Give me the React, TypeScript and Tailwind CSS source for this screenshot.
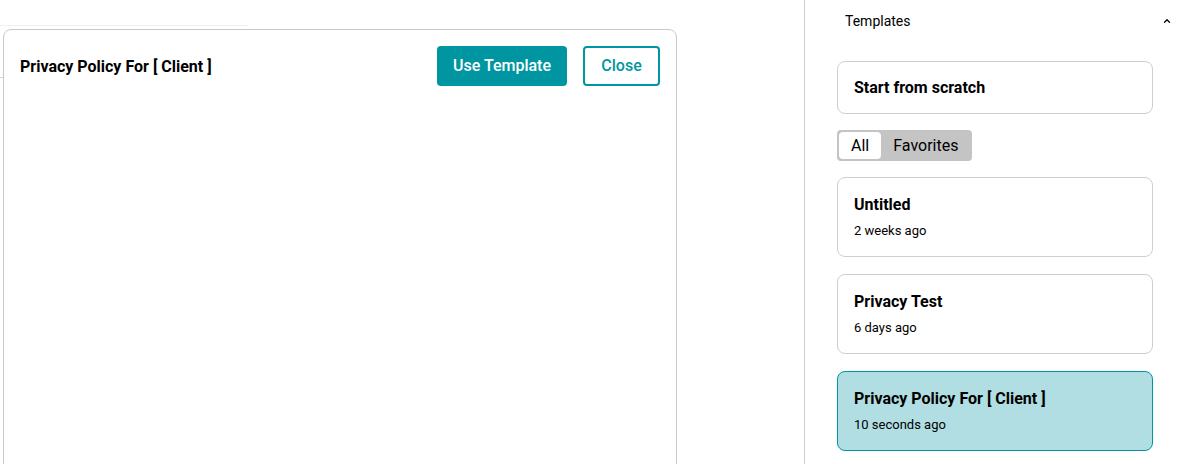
import React from 'react';
import { ChevronUp } from 'lucide-react';

const templates = [
  { name: 'Untitled', time: '2 weeks ago' },
  { name: 'Privacy Test', time: '6 days ago' },
  { name: 'Privacy Policy For [ Client ]', time: '10 seconds ago', active: true },
];

export default function App() {
  return (
    <div
      className="flex h-[464px] w-[1181px] overflow-hidden bg-white text-black"
      style={{ fontFamily: 'Roboto, "Liberation Sans", sans-serif' }}
    >
      {/* Editor area with preview modal */}
      <div className="relative w-[804px] shrink-0">
        {/* Page behind the modal */}
        <div className="h-[26px] w-[248px] border-b border-[#f0f0f0]" />
        <div className="mt-[51px] h-px w-[10px] bg-[#d4d4d4]" />

        <div className="absolute left-[3px] top-[29px] h-[480px] w-[674px] rounded-lg border border-[#c9c9c9] bg-white">
          <div className="flex items-center justify-between pl-4 pr-4 pt-4">
            <h2 className="mt-px text-base font-bold">Privacy Policy For [ Client ]</h2>
            <div className="flex gap-4">
              <button className="h-10 w-[130px] rounded bg-[#0096a1] text-base font-medium text-white">
                Use Template
              </button>
              <button className="h-10 w-[77px] rounded border-2 border-[#0096a1] text-base font-medium text-[#0096a1]">
                Close
              </button>
            </div>
          </div>
        </div>
      </div>

      {/* Templates sidebar */}
      <aside className="flex-1 border-l border-[#cfcfcf]">
        <div className="flex h-[42px] items-center justify-between pl-10 pr-[9px]">
          <span className="text-sm">Templates</span>
          <ChevronUp size={10} strokeWidth={3} />
        </div>

        <div className="pl-8 pr-7">
          <div className="mt-[19px] flex h-[53px] items-center rounded-lg border border-[#cfcfcf] px-4 text-base font-bold">
            Start from scratch
          </div>

          <div className="mt-4 inline-flex h-[31px] items-center rounded bg-[#c4c4c4] p-0.5 text-base">
            <span className="flex h-full items-center rounded-sm bg-white px-3">All</span>
            <span className="px-3">Favorites</span>
          </div>

          <div className="mt-4 flex flex-col gap-[17px]">
            {templates.map((t) => (
              <div
                key={t.name}
                className={`flex h-20 flex-col justify-center gap-2 rounded-lg border px-4 ${
                  t.active ? 'border-[#0096a1] bg-[#b0dee2]' : 'border-[#cfcfcf] bg-white'
                }`}
              >
                <div className="text-base font-bold leading-5">{t.name}</div>
                <div className="text-[13px] leading-4">{t.time}</div>
              </div>
            ))}
          </div>
        </div>
      </aside>
    </div>
  );
}
